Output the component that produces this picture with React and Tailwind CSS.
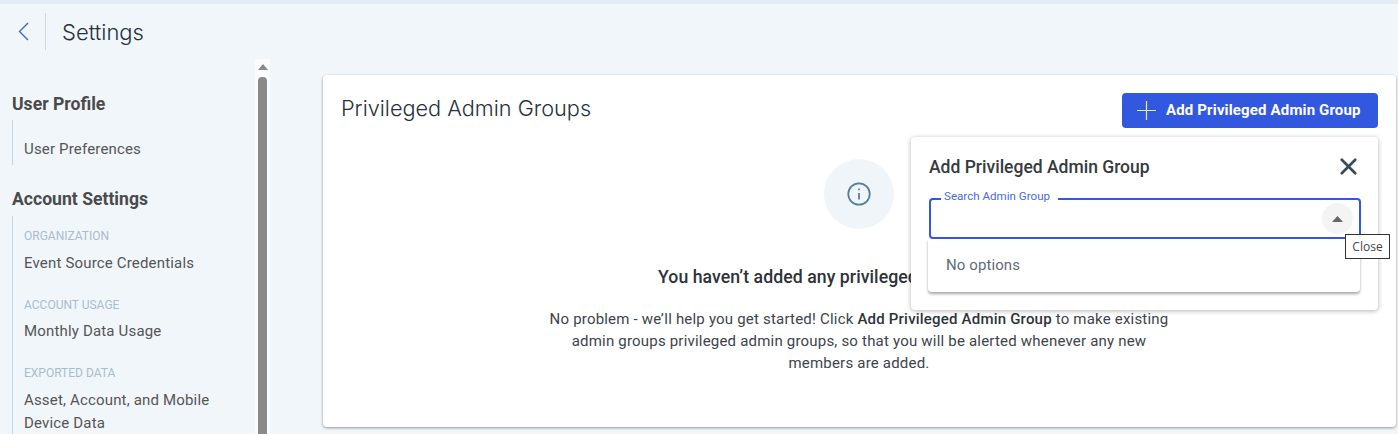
import React from "react";
import { X } from "lucide-react";

const SectionLabel = ({ children }) => (
	<div className="text-[12px] leading-[18px] text-[#a9bccd] uppercase">{children}</div>
);

const NavItem = ({ children }) => (
	<div className="text-[15px] leading-[23px] tracking-[0.17px] text-[#555]">{children}</div>
);

const Sidebar = () => (
	<div className="w-[255px] pl-3 pt-[33px]">
		<h3 className="text-[17.6px] leading-6 font-bold text-[#4a4a4a]">User Profile</h3>
		<div className="mt-[4px] h-[45px] flex items-center border-l border-[#c5d5e2] pl-[11px] pt-[13px]">
			<NavItem>User Preferences</NavItem>
		</div>
		<h3 className="mt-[22px] text-[17.6px] leading-6 font-bold text-[#4a4a4a]">Account Settings</h3>
		<div className="mt-[5px] border-l border-[#c5d5e2] pl-[11px] pt-[11px] pb-8">
			<SectionLabel>Organization</SectionLabel>
			<div className="mt-[7px]">
				<NavItem>Event Source Credentials</NavItem>
			</div>
			<div className="mt-[21px]">
				<SectionLabel>Account Usage</SectionLabel>
			</div>
			<div className="mt-[6px]">
				<NavItem>Monthly Data Usage</NavItem>
			</div>
			<div className="mt-[21px]">
				<SectionLabel>Exported Data</SectionLabel>
			</div>
			<div className="mt-[7px] w-[210px]">
				<NavItem>Asset, Account, and Mobile Device Data</NavItem>
			</div>
		</div>
	</div>
);

const Scrollbar = () => (
	<div className="w-[15px] bg-[#f9fbfd] flex flex-col items-center pt-[5px]">
		<svg width="10" height="6" viewBox="0 0 10 6">
			<path d="M5 0L10 6H0z" fill="#8a8a8a" />
		</svg>
		<div className="mt-[7px] w-[9px] flex-1 bg-[#8a8a8a] rounded-t-[4px]"></div>
	</div>
);

const AddGroupPopover = () => (
	<div className="absolute left-[588px] top-[62px] w-[467px] h-[173px] bg-white rounded-[4px] shadow-[0_1px_5px_rgba(0,0,0,0.3)] px-[18px] pt-[17px]">
		<div className="flex items-center justify-between h-[26px]">
			<span className="text-[17.5px] font-medium text-[#343a40]">Add Privileged Admin Group</span>
			<X size={27} strokeWidth={2.4} className="text-[#3b4a57] mr-[-2px] mt-[-2px]" />
		</div>
		<div className="relative mt-[18px] h-[41px] w-[432px] border-2 border-[#3358e0] rounded-[4px] flex items-center justify-end pr-[6px]">
			<span className="absolute left-[10px] top-[-12px] bg-white pl-[3px] pr-[8px] text-[11.6px] leading-[16px] text-[#4a6ae6]">
				Search Admin Group
			</span>
			<div className="w-[31px] h-[31px] rounded-full bg-[#f4f4f4] flex items-center justify-center">
				<svg width="11" height="6" viewBox="0 0 11 6">
					<path d="M5.5 0L11 6H0z" fill="#666" />
				</svg>
			</div>
		</div>
		<div className="absolute left-[17px] top-[102px] w-[432px] h-[53px] bg-white rounded-b-[4px] shadow-[0_2px_3px_rgba(0,0,0,0.35)] flex items-center pl-[18px] text-[15px] tracking-[0.1px] text-[#5f6b76]">
			No options
		</div>
	</div>
);

const App = () => {
	return (
		<div className="relative h-[434px] overflow-hidden bg-[#f1f6fb] flex flex-col font-['Roboto',sans-serif]">
			<div className="h-1 bg-[#e3ecf4]"></div>
			<div className="h-[55px] flex items-center pl-[18px]">
				<svg width="11" height="19" viewBox="0 0 11 19" fill="none" stroke="#3f62e6" strokeWidth="1.4">
					<path d="M10 1L1.5 9.5L10 18" />
				</svg>
				<div className="ml-[16px] w-px h-[37px] bg-[#ccd8e2]"></div>
				<h1 className="ml-[16px] pt-px text-[22px] text-[#26323d] font-['Inter',sans-serif] font-light">Settings</h1>
			</div>
			<div className="flex flex-1 min-h-0">
				<Sidebar />
				<Scrollbar />
				<div className="flex-1 pl-[53px] pr-[2px] pt-4 pb-[7px]">
					<div className="relative h-full bg-white rounded-[4px] shadow-[0_1px_3px_rgba(0,0,0,0.4)]">
						<div className="flex items-start justify-between pl-[18px] pr-[18px] pt-[18px]">
							<h2 className="mt-[-1px] text-[21.7px] leading-[32px] text-[#26323d] font-['Inter',sans-serif] font-light">
								Privileged Admin Groups
							</h2>
							<button className="w-[256px] h-[35px] bg-[#3358e0] rounded-[4px] flex items-center pl-[15px] text-white text-[15px] tracking-[0.15px] font-bold">
								<svg width="19" height="19" viewBox="0 0 19 19" stroke="#dfe6fb" strokeWidth="1.2">
									<path d="M9.5 0V19M0 9.5H19" />
								</svg>
								<span className="ml-[10px]">Add Privileged Admin Group</span>
							</button>
						</div>
						<div className="flex flex-col items-center mt-[31px] pr-px">
							<div className="w-[70px] h-[70px] rounded-full bg-[#f0f5f9] flex items-center justify-center">
								<svg width="22" height="22" viewBox="0 0 22 22" fill="none" stroke="#4f7f9b" strokeWidth="1.6" className="scale-[1.1]">
									<circle cx="11" cy="11" r="9.75" />
									<path d="M11 10V16M11 6V7.5" />
								</svg>
							</div>
							<h4 className="mt-[36px] text-[17.7px] tracking-[0.05px] leading-6 font-medium text-[#2d3339]">
								You haven’t added any privileged admin groups yet
							</h4>
							<p className="mt-[19px] w-[625px] text-center text-[15px] leading-[22px] tracking-[0.2px] text-[#3d444b]">
								No problem - we’ll help you get started! Click <b className="font-medium text-[#2d3339]">Add Privileged Admin Group</b> to make existing admin groups privileged admin groups, so that you will be alerted whenever any new members are added.
							</p>
						</div>
						<AddGroupPopover />
					</div>
				</div>
			</div>
			<div className="absolute left-[1345px] top-[234px] w-[45px] h-[25px] bg-white border border-[#333] flex items-center justify-center text-[12px] text-[#444] font-['Open_Sans',sans-serif]">
				Close
			</div>
		</div>
	);
};

export default App;
